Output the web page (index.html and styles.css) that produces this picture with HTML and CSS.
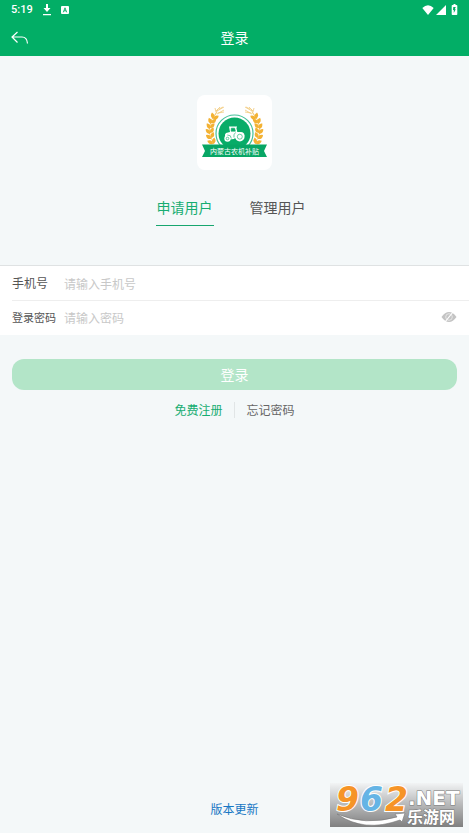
FILE: index.html
```html
<!DOCTYPE html>
<html lang="zh-CN">
<head>
<meta charset="utf-8">
<meta name="viewport" content="width=device-width, initial-scale=1">
<title>登录</title>
<link rel="stylesheet" href="styles.css">
</head>
<body>
<header class="top">
  <div class="status">
    <span class="clock">5:19</span>
    <svg class="status-icon" width="10" height="12" viewBox="0 0 10 12" aria-hidden="true"><path d="M4 0h2v4h2.500L5 8 1.500 4H4zM1 10h8v1.200H1z" fill="#fff"/></svg>
    <svg class="status-icon" width="8" height="8" viewBox="0 0 8 8" aria-hidden="true"><rect width="8" height="8" rx="1" fill="#fff"/><path d="M2.300 6.300 4 1.800 5.700 6.300M3 4.800h2" fill="none" stroke="#02ae66" stroke-width=".9"/></svg>
    <svg class="signals" width="36" height="12" viewBox="0 0 36 12" aria-hidden="true"><path d="M.3 4Q6-1.500 11.700 4L6 11zM24 1v10H14z" fill="#fff"/><path d="M30.500 1h1V0h2v1h1q.8 0 .8.800v8.400q0 .8-.8.800h-4q-.8 0-.8-.8V1.800q0-.8.800-.8z" fill="#fff"/><path d="M31.300 3h2.500l-1 2.200h1L31.800 9V6h-.8z" fill="#02ae66"/></svg>
  </div>
  <div class="navbar">
    <button class="back" type="button" aria-label="返回"><svg width="18" height="14" viewBox="0 0 18 14"><path d="M6.500 1 1 6l5.500 5.500M1 6h10q5 0 5.500 6.500" fill="none" stroke="#fff" stroke-width="1.200"/></svg></button>
    <h1>登录</h1>
  </div>
</header>
<main>
  <svg class="logo" width="75" height="75" viewBox="0 0 75 75" role="img" aria-label="内蒙古农机补贴">
    <defs>
      <path id="leaf" d="M0 0Q-2.800-3.600.8-6.500 4.300-2.500 0 0z"/>
      <g id="wreath" fill="#f3b234">
        <path d="M17 49Q6 32 20 17" fill="none" stroke="#f1b637" stroke-width=".6"/>
        <use href="#leaf" transform="translate(16 49) rotate(-68)"/><use href="#leaf" transform="translate(16 49) rotate(4)"/>
        <use href="#leaf" transform="translate(14 44) rotate(-58)"/><use href="#leaf" transform="translate(14 43) rotate(16)"/>
        <use href="#leaf" transform="translate(13 39) rotate(-48)"/><use href="#leaf" transform="translate(13 38) rotate(26)"/>
        <use href="#leaf" transform="translate(13 34) rotate(-36)"/><use href="#leaf" transform="translate(13 33) rotate(36)"/>
        <use href="#leaf" transform="translate(14 29) rotate(-26)"/><use href="#leaf" transform="translate(14 28) rotate(46)"/>
        <use href="#leaf" transform="translate(16 24) rotate(-16)"/><use href="#leaf" transform="translate(16 24) rotate(54)"/>
        <path d="m18 20 3-6M20 19l7-4M19 17l-1-4M20 16l7-4M22 14l4-2M19 16l4-4M21 18l6-1" fill="none" stroke="#f1c979" stroke-width=".8"/>
      </g>
    </defs>
    <use href="#wreath"/>
    <use href="#wreath" transform="translate(75 0) scale(-1 1)"/>
    <circle cx="37.500" cy="38.500" r="18.500" fill="#fff" stroke="#44c19a" stroke-width="1.200"/>
    <circle cx="37.500" cy="38.500" r="16" fill="#08ac68"/>
    <g fill="#fff">
      <path d="M32 31.500h8v1h-.7l1 4.500 5.700.5 1.500 2.500-1 3H38l-1 1-5 .5-4-2v-3l1-1.500 4-1z"/>
      <circle cx="30.500" cy="43.500" r="3.200"/><circle cx="42.800" cy="41.700" r="4.800"/>
    </g>
    <g fill="none" stroke="#08ac68" stroke-width=".6"><path d="M34.300 33.200h3.300l.8 3h-4.300z" fill="#08ac68"/><circle cx="30.500" cy="43.500" r="1.300"/><circle cx="42.800" cy="41.700" r="2.500"/><path d="M34.300 43.500q0-3.700-4-3.500M38.500 37.500q-2.300 2-1.500 5"/></g>
    <path d="M5 49.500h65L67 56l3 6H5l3-6z" fill="#08a665"/>
    <text class="logo-text" x="37.500" y="59" text-anchor="middle">内蒙古农机补贴</text>
  </svg>
  <nav class="tabs">
    <button class="tab active" type="button">申请用户</button>
    <button class="tab" type="button">管理用户</button>
  </nav>
  <form class="login">
    <div class="fields">
      <div class="field">
        <label for="phone">手机号</label>
        <input id="phone" type="tel" placeholder="请输入手机号">
      </div>
      <div class="field">
        <label class="small" for="password">登录密码</label>
        <input id="password" type="password" placeholder="请输入密码">
        <button class="eye" type="button" aria-label="显示密码"><svg width="16" height="12" viewBox="0 0 16 12"><path d="M.5 6Q4 1 8 1t7.500 5Q12 11 8 11T.5 6z" fill="#c4c4c4"/><circle cx="8" cy="6" r="3.300" fill="none" stroke="#e6e6e6" stroke-width="1"/><path d="m4 11 8-10" stroke="#fff" stroke-width="1.200"/></svg></button>
      </div>
    </div>
    <button class="submit" type="submit">登录</button>
  </form>
  <div class="links">
    <a class="register" href="#">免费注册</a>
    <a class="forgot" href="#">忘记密码</a>
  </div>
</main>
<footer><a href="#">版本更新</a></footer>
<svg class="watermark" width="133" height="44" viewBox="0 0 133 44" role="img" aria-label="962.NET 乐游网">
  <defs>
    <linearGradient id="shade" x2="0" y2="1"><stop offset="0" stop-color="#f2f4f5"/><stop offset=".45" stop-color="#bcbdbe"/><stop offset="1" stop-color="#808080"/></linearGradient>
  </defs>
  <rect width="133" height="44" fill="url(#shade)"/>
  <path d="M7 31Q35 43 67 34l-2-3 10-1-3 9-2-2Q34 50 7 31z" fill="#fff" stroke="#777" stroke-width=".6"/>
  <g class="mark-number">
    <text x="6" y="28" fill="#f69427">9</text>
    <text x="30" y="28" fill="#65b4e5">6</text>
    <text x="55" y="28" fill="#f69427">2</text>
  </g>
  <text class="mark-net" x="78" y="22">.NET</text>
  <text class="mark-name" x="77" y="40">乐游网</text>
</svg>
</body>
</html>
```
FILE: styles.css
```css
* { box-sizing: border-box; }
body {
  margin: 0;
  min-height: 100vh;
  display: flex;
  flex-direction: column;
  background: #f4f8f9;
  color: #555;
  font: 12px/18px "Noto Sans CJK SC", sans-serif;
}
button, input { font: inherit; color: inherit; border: 0; padding: 0; background: none; }
a { color: inherit; text-decoration: none; }
svg { display: block; }
.top { background: #02ae66; color: #fff; }
.status { height: 20px; padding: 0 11px; display: flex; align-items: center; }
.clock { font: 500 11px/20px Roboto, sans-serif; }
.status-icon { margin-left: 9px; }
.signals { margin-left: auto; }
.navbar { height: 36px; padding: 0 11px; display: grid; grid-template-columns: 24px 1fr 24px; align-items: center; }
.navbar h1 { margin: 0; padding-bottom: 2px; text-align: center; font-size: 14px; font-weight: 400; line-height: 20px; }
main { flex: 1; }
.logo { margin: 39px auto 0; background: #fff; border-radius: 8px; }
.logo-text { font-size: 7px; fill: #fff; }
.tabs { margin: 20px 0 39px; display: flex; justify-content: center; gap: 35px; padding-right: 7px; }
.tab { height: 36px; padding: 0 1px 2px; font-size: 14px; border-bottom: 1px solid transparent; }
.tab.active { color: #17ad72; border-color: #17a66f; }
.fields { background: #fff; border-top: 1px solid #dfe2e3; }
.field { height: 34px; margin-left: 12px; padding: 0 12px 0 0; display: flex; align-items: center; }
.field + .field { height: 35px; padding-bottom: 2px; border-top: 1px solid #eee; }
.field label { width: 52px; flex: none; }
.field .small { font-size: 11px; }
.field input { flex: 1; min-width: 0; height: 30px; outline: 0; }
.field input::placeholder { color: #c8c8c8; opacity: 1; }
.submit { display: block; width: calc(100% - 24px); height: 31px; margin: 24px 12px 0; padding-bottom: 2px; border-radius: 12px; background: #b3e5c8; color: #fff; font-size: 14px; }
.links { margin-top: 12px; display: flex; justify-content: center; }
.links a { padding: 0 12px; line-height: 16px; }
.register { color: #17ad72; }
.forgot { color: #666; box-shadow: -1px 0 #e1e5e6; }
footer { text-align: center; padding-bottom: 15px; color: #1777c4; }
.watermark { position: fixed; right: 6px; bottom: 6px; }
.mark-number { font: italic 700 33px "DejaVu Sans", sans-serif; stroke: #fff; stroke-width: 2px; paint-order: stroke; }
.mark-net { font: 700 20px "DejaVu Sans", sans-serif; fill: #fff; stroke: #777; stroke-width: 1px; paint-order: stroke; }
.mark-name { font-size: 16px; font-weight: 700; fill: #fff; stroke: #777; stroke-width: 1px; paint-order: stroke; }
```
